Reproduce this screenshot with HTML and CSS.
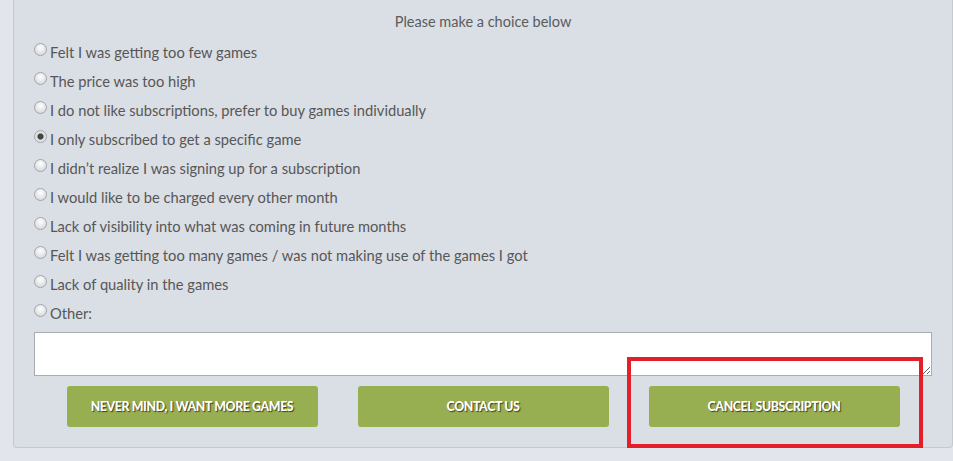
FILE: index.html
```html
<!DOCTYPE html>
<html lang="en">
<head>
    <meta charset="UTF-8">
    <meta name="viewport" content="width=device-width, initial-scale=1.0">
    <title>Cancel Subscription</title>
    <link rel="stylesheet" href="styles.css">
</head>
<body>
    <div class="panel">
        <p class="prompt">Please make a choice below</p>
        <form class="reasons">
            <label class="reason"><input type="radio" name="reason"> Felt I was getting too few games</label>
            <label class="reason"><input type="radio" name="reason"> The price was too high</label>
            <label class="reason"><input type="radio" name="reason"> I do not like subscriptions, prefer to buy games individually</label>
            <label class="reason"><input type="radio" name="reason" checked> I only subscribed to get a specific game</label>
            <label class="reason"><input type="radio" name="reason"> I didn’t realize I was signing up for a subscription</label>
            <label class="reason"><input type="radio" name="reason"> I would like to be charged every other month</label>
            <label class="reason"><input type="radio" name="reason"> Lack of visibility into what was coming in future months</label>
            <label class="reason"><input type="radio" name="reason"> Felt I was getting too many games / was not making use of the games I got</label>
            <label class="reason"><input type="radio" name="reason"> Lack of quality in the games</label>
            <label class="reason"><input type="radio" name="reason"> Other:</label>
            <textarea class="other-text" rows="2"></textarea>
            <div class="actions">
                <button type="button" class="btn">Never mind, I want more games</button>
                <button type="button" class="btn">Contact us</button>
                <button type="button" class="btn btn-cancel">Cancel subscription</button>
            </div>
        </form>
    </div>
</body>
</html>
```

FILE: styles.css
```css
* {
    margin: 0;
    padding: 0;
    box-sizing: border-box;
}

body {
    font-family: Lato, "Open Sans", sans-serif;
    background-color: #e2e5eb;
    color: #555;
    width: 953px;
    height: 461px;
    overflow: hidden;
}

.panel {
    margin-left: 13px;
    width: 940px;
    background-color: #dadee5;
    border: 1px solid #c5c9d0;
    border-top: none;
    border-radius: 0 0 4px 4px;
    padding: 13px 19px 20px 19px;
}

.prompt {
    text-align: center;
    font-size: 14.5px;
    color: #5c5c5c;
    margin-bottom: 8px;
}

.reasons {
    display: flex;
    flex-direction: column;
}

.reason {
    display: flex;
    align-items: center;
    height: 29px;
    font-size: 14.7px;
    color: #575757;
    padding-bottom: 2px;
}

.reason input {
    appearance: none;
    -webkit-appearance: none;
    width: 13px;
    height: 13px;
    border-radius: 50%;
    border: 1px solid #a3a6aa;
    background: radial-gradient(circle at 50% 35%, #ffffff 0%, #e4e5e7 55%, #cfd1d4 100%);
    margin: 0 3px 0 1px;
    position: relative;
    top: -2px;
    flex-shrink: 0;
}

.reason input:checked {
    background: radial-gradient(circle, #4a4a4a 0, #3d3d3d 2.5px, #d8d9dc 3.5px, #f4f4f5 100%);
}

.other-text {
    display: block;
    width: 898px;
    height: 44px;
    margin: 4px 0 0 1px;
    border: 1px solid #a9acb0;
    background: #fff;
    resize: vertical;
    font-family: inherit;
}

.actions {
    display: flex;
    justify-content: center;
    gap: 40px;
    margin-top: 10px;
}

.btn {
    width: 251px;
    height: 41px;
    background-color: #97ae51;
    border: none;
    border-radius: 3px;
    color: #fff;
    font-family: Lato, sans-serif;
    font-weight: 900;
    font-size: 12.3px;
    text-transform: uppercase;
    letter-spacing: -0.35px;
    text-shadow: 1px 1px 1px #3d4220;
    cursor: pointer;
}

/* highlight box drawn over the cancel button */
.btn-cancel {
    position: relative;
}

.btn-cancel::after {
    content: "";
    box-sizing: border-box;
    position: absolute;
    left: -22px;
    top: -29px;
    width: 296px;
    height: 91px;
    border: 4px solid #e3202a;
}
```
